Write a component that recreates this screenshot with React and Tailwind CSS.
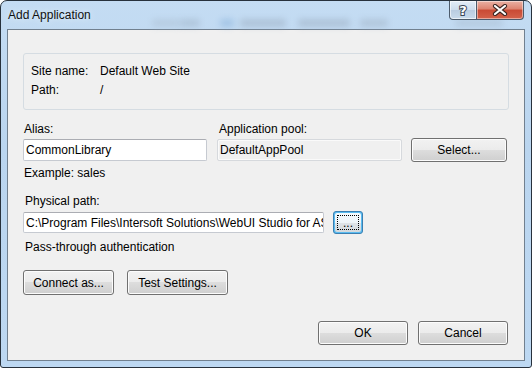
import React from 'react';

// Win7 style push button
const Btn = ({ children, className = '' }) => (
    <div className={'flex items-center justify-center rounded-[3px] border border-[#707070] bg-[linear-gradient(#f2f2f2_0%,#ebebeb_50%,#dddddd_50%,#cfcfcf_100%)] shadow-[inset_0_0_0_1px_#fcfcfc] text-black ' + className}>
        {children}
    </div>
);

const Field = ({ children, className = '' }) => (
    <div className={'flex items-center overflow-hidden whitespace-nowrap rounded-[2px] border border-[#c6cad1] border-t-[#abadb3] bg-white pl-[2px] ' + className}>
        {children}
    </div>
);

// blurry stuff showing through the glass title bar
const blobs = [
    { x: 145, w: 28, c: 'bg-[#a9bbcd]' },
    { x: 173, w: 20, c: 'bg-[#9aadc0]' },
    { x: 213, w: 14, c: 'bg-[#7eaad6]' },
    { x: 233, w: 46, c: 'bg-[#95a6b8]' },
    { x: 291, w: 52, c: 'bg-[#95a6b8]' },
    { x: 353, w: 28, c: 'bg-[#9cadbf]' },
    { x: 448, w: 48, c: 'bg-[#a6b9cc]' },
];

export default function App() {
    return (
        <div className="w-[532px] h-[368px] flex flex-col rounded-t-[7px] rounded-b-[3px] border border-[#27313c] bg-[linear-gradient(#c4dcf3,#bad5ef_40%,#bdd8f2)] px-[6px] pb-[6px] font-['Liberation_Sans',Arial,sans-serif] text-[12px] text-black">
            {/* title bar */}
            <div className="relative h-[28px] flex justify-between items-start">
                {blobs.map((b, i) => (
                    <div
                        key={i}
                        className={'absolute top-[18px] h-[8px] rounded-[3px] blur-[3px] opacity-45 ' + b.c}
                        style={{ left: b.x, width: b.w }}
                    />
                ))}
                <div className="relative pl-[1px] pt-[6px] text-[12px] leading-[16px] text-[#111] [text-shadow:0_0_6px_#e8f2fc]">Add Application</div>
                <div className="relative flex mr-[1px] h-[19px]">
                    <div className="w-[28px] h-full flex items-center justify-center rounded-bl-[4px] border border-t-0 border-[#4c5b6c] bg-[linear-gradient(#e3edf7,#cddcec_50%,#b9cce0_50%,#c9dbec)] shadow-[inset_0_0_0_1px_rgba(255,255,255,0.6)]">
                        <span className="font-['DejaVu_Sans',sans-serif] text-[13px] font-bold leading-none text-white [-webkit-text-stroke:2px_#3a4656] [paint-order:stroke_fill]">?</span>
                    </div>
                    <div className="w-[47px] h-full flex items-center justify-center rounded-br-[4px] border border-l-0 border-t-0 border-[#4c5b6c] bg-[linear-gradient(#eab1a4,#dd8370_45%,#c94a34_50%,#d3624b)] shadow-[inset_0_0_0_1px_rgba(255,255,255,0.45)]">
                        <svg width="16" height="12" viewBox="0 0 16 12">
                            <path d="M3 2 L13 10 M13 2 L3 10" stroke="#3b2420" strokeWidth="4.2" strokeLinecap="round" />
                            <path d="M3 2 L13 10 M13 2 L3 10" stroke="#fff" strokeWidth="2.2" strokeLinecap="round" />
                        </svg>
                    </div>
                </div>
            </div>

            {/* client area */}
            <div className="flex-1 flex flex-col border border-[#71808f] bg-[#f0f0f0] pl-[15px] pr-[15px] pt-[23px]">
                <div className="h-[57px] rounded-[3px] border border-[#d5dce2] pl-[7px] pt-[8px]">
                    <div className="grid grid-cols-[69px_1fr] leading-[19px]">
                        <span>Site name:</span>
                        <span>Default Web Site</span>
                        <span>Path:</span>
                        <span>/</span>
                    </div>
                </div>

                <div className="mt-[11px] h-[16px] flex items-center">
                    <span className="w-[194px] pl-[1px]">Alias:</span>
                    <span className="pl-[2px]">Application pool:</span>
                </div>
                <div className="mt-[1px] h-[24px] flex items-center">
                    <Field className="w-[184px] h-[22px]">CommonLibrary</Field>
                    <div className="ml-[10px] w-[185px] h-[22px] flex items-center rounded-[2px] border border-[#d6d9dd] bg-[#f0f0f0] pl-[2px] shadow-[inset_0_0_0_1px_#fafafa]">DefaultAppPool</div>
                    <Btn className="ml-[9px] w-[96px] h-[24px]">Select...</Btn>
                </div>

                <div className="mt-[3px] h-[16px] flex items-center pl-[1px]">Example: sales</div>
                <div className="mt-[12px] h-[16px] flex items-center pl-[2px]">Physical path:</div>
                <div className="mt-[2px] h-[23px] flex items-center">
                    <Field className="w-[301px] h-[21px]">C:\Program Files\Intersoft Solutions\WebUI Studio for AS</Field>
                    <div className="ml-[9px] w-[30px] h-[23px] rounded-[3px] border border-[#3c7fb1] p-[1px] bg-[#5bbcf0]">
                        <div className="w-full h-full rounded-[2px] bg-[linear-gradient(#f6fbfe_0%,#eef4f8_50%,#dfe4e8_50%,#d4d9dd_100%)] p-[2px]">
                            <div className="w-full h-full flex items-center justify-center border border-dotted border-black leading-none">...</div>
                        </div>
                    </div>
                </div>
                <div className="mt-[5px] h-[16px] flex items-center pl-[2px]">Pass-through authentication</div>

                <div className="mt-[15px] flex gap-[13px]">
                    <Btn className="w-[91px] h-[25px]">Connect as...</Btn>
                    <Btn className="w-[101px] h-[25px]">Test Settings...</Btn>
                </div>

                <div className="mt-[26px] mr-[1px] flex justify-end gap-[10px]">
                    <Btn className="w-[90px] h-[24px]">OK</Btn>
                    <Btn className="w-[90px] h-[24px]">Cancel</Btn>
                </div>
            </div>
        </div>
    );
}
